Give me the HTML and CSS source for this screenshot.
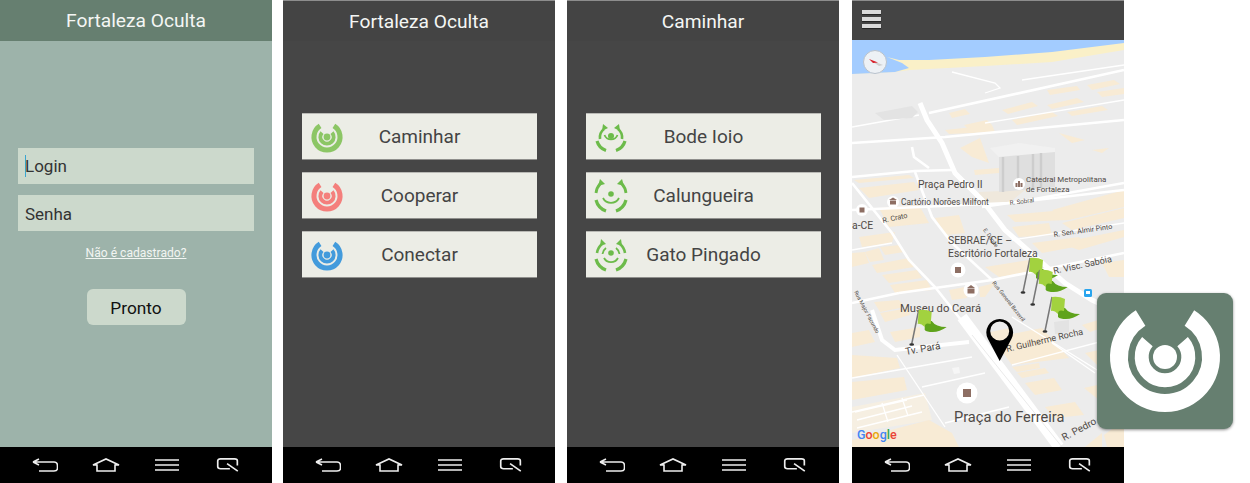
FILE: index.html
```html
<!DOCTYPE html>
<html lang="en">
<head>
    <meta charset="UTF-8">
    <meta name="viewport" content="width=device-width, initial-scale=1.0">
    <title>Fortaleza Oculta</title>
    <link rel="stylesheet" href="styles.css">
</head>
<body>
    <!-- shared icons -->
    <svg class="sprites" width="0" height="0">
        <symbol id="logo" viewBox="-60 -60 120 120">
            <path d="M-24.4 -39 A46 46 0 1 0 24.4 -39" fill="none" stroke="currentColor" stroke-width="18"/>
            <path d="M-17.6 -15.3 A23.3 23.3 0 1 0 17.6 -15.3" fill="none" stroke="currentColor" stroke-width="14"/>
            <circle r="12" fill="currentColor"/>
        </symbol>
        <symbol id="walk-a" viewBox="-20 -20 40 40">
            <g fill="none" stroke="currentColor">
                <path stroke-width="3.2" d="M-14 4 A14 14 0 0 0 -5 13.500"/>
                <path stroke-width="3.2" d="M14 4 A14 14 0 0 1 5 13.500"/>
                <path stroke-width="2.6" d="M-11 2 A11 11 0 0 1 -7 -8"/>
                <path stroke-width="2.6" d="M11 2 A11 11 0 0 0 7 -8"/>
                <path stroke-width="1.8" d="M-6.500 -2 A7 7 0 0 0 6.500 -2"/>
            </g>
            <polygon fill="currentColor" points="-8,-13 -3,-9 -9,-6"/>
            <polygon fill="currentColor" points="8,-13 3,-9 9,-6"/>
            <circle cy="-1" r="3" fill="currentColor"/>
        </symbol>
        <symbol id="walk-b" viewBox="-20 -20 40 40">
            <g fill="none" stroke="currentColor">
                <path stroke-width="3.2" d="M-15 4 A16 16 0 0 0 -5 15"/>
                <path stroke-width="3.2" d="M15 4 A16 16 0 0 1 5 15"/>
                <path stroke-width="2.8" d="M-15 -3 A16 16 0 0 1 -11 -12"/>
                <path stroke-width="2.8" d="M15 -3 A16 16 0 0 0 11 -12"/>
                <path stroke-width="1.8" d="M-8 2 A9 9 0 0 0 8 2"/>
            </g>
            <polygon fill="currentColor" points="-11,-17 -6,-12 -13,-10"/>
            <polygon fill="currentColor" points="11,-17 6,-12 13,-10"/>
            <circle cy="-2" r="2.8" fill="currentColor"/>
        </symbol>
        <symbol id="walk-c" viewBox="-20 -20 40 40">
            <g fill="none" stroke="currentColor">
                <path stroke-width="3.2" d="M-15 4 A16 16 0 0 0 -5 15"/>
                <path stroke-width="3.2" d="M15 4 A16 16 0 0 1 5 15"/>
                <path stroke-width="2.6" d="M-14 -2 A14 14 0 0 1 -9 -11"/>
                <path stroke-width="2.6" d="M14 -2 A14 14 0 0 0 9 -11"/>
                <path stroke-width="1.8" d="M-8.500 -1 A9 9 0 0 1 -5 -7"/>
                <path stroke-width="1.8" d="M8.500 -1 A9 9 0 0 0 5 -7"/>
                <path stroke-width="1.8" d="M-7 3 A8 8 0 0 0 7 3"/>
            </g>
            <polygon fill="currentColor" points="-10,-16 -5,-11 -11,-9"/>
            <polygon fill="currentColor" points="10,-16 5,-11 11,-9"/>
            <circle cy="-2" r="2.8" fill="currentColor"/>
        </symbol>
        <symbol id="nav-back" viewBox="0 0 26 14">
            <path d="M1 4 H22 Q25.5 4 25.5 8 V10 Q25.5 13 22 13 H7 M1 4 L7 1 M1 4 L7 7" fill="none" stroke="currentColor" stroke-width="1.6"/>
        </symbol>
        <symbol id="nav-home" viewBox="0 0 28 14">
            <path d="M1 7 L14 1 L27 7 H23 V13 H5 V7 Z" fill="none" stroke="currentColor" stroke-width="1.6"/>
        </symbol>
        <symbol id="nav-menu" viewBox="0 0 24 14">
            <path d="M0 2 H24 M0 7 H24 M0 12 H24" fill="none" stroke="currentColor" stroke-width="1.7"/>
        </symbol>
        <symbol id="nav-recent" viewBox="0 0 24 15">
            <path d="M14 11.500 H4 Q1 11.500 1 9 V3 Q1 1 4 1 H19 Q22 1 22 3 V8 M11 6 L22.500 14" fill="none" stroke="currentColor" stroke-width="1.8"/>
        </symbol>
        <symbol id="flag" viewBox="-10 -2 42 42">
            <path d="M0 0 L-7 34" stroke="#777" stroke-width="1.5"/>
            <ellipse cx="-7" cy="34.500" rx="2.400" ry="1.300" fill="#333"/>
            <path d="M6 12 Q10 10 13 11 Q17 17 28 17 Q21 22 14 22 Q8 22 6 20 Z" fill="#5fa31c"/>
            <path d="M0 0 Q7 -1 13 2 L12 14 Q6 12 6 17 Q2 13 -1 14 Z" fill="#a2d23f"/>
        </symbol>
    </svg>

    <div class="page">
        <section class="screen screen-login">
            <header class="bar bar-green">Fortaleza Oculta</header>
            <main class="content login">
                <div class="field"><span class="caret"></span>Login</div>
                <div class="field">Senha</div>
                <a class="signup" href="#">Não é cadastrado?</a>
                <button class="done">Pronto</button>
            </main>
            <nav class="nav">
                <span class="nav-item"><svg class="nav-i w26"><use href="#nav-back"/></svg></span>
                <span class="nav-item"><svg class="nav-i w28"><use href="#nav-home"/></svg></span>
                <span class="nav-item"><svg class="nav-i w24"><use href="#nav-menu"/></svg></span>
                <span class="nav-item"><svg class="nav-i w24"><use href="#nav-recent"/></svg></span>
            </nav>
        </section>

        <section class="screen screen-dark">
            <header class="bar bar-dark">Fortaleza Oculta</header>
            <main class="content menu">
                <button class="item"><svg class="item-icon green"><use href="#logo"/></svg>Caminhar</button>
                <button class="item"><svg class="item-icon red"><use href="#logo"/></svg>Cooperar</button>
                <button class="item"><svg class="item-icon blue"><use href="#logo"/></svg>Conectar</button>
            </main>
            <nav class="nav">
                <span class="nav-item"><svg class="nav-i w26"><use href="#nav-back"/></svg></span>
                <span class="nav-item"><svg class="nav-i w28"><use href="#nav-home"/></svg></span>
                <span class="nav-item"><svg class="nav-i w24"><use href="#nav-menu"/></svg></span>
                <span class="nav-item"><svg class="nav-i w24"><use href="#nav-recent"/></svg></span>
            </nav>
        </section>

        <section class="screen screen-dark screen-third">
            <header class="bar bar-dark">Caminhar</header>
            <main class="content menu">
                <button class="item"><svg class="walk-icon"><use href="#walk-a"/></svg>Bode Ioio</button>
                <button class="item"><svg class="walk-icon"><use href="#walk-b"/></svg>Calungueira</button>
                <button class="item"><svg class="walk-icon"><use href="#walk-c"/></svg>Gato Pingado</button>
            </main>
            <nav class="nav">
                <span class="nav-item"><svg class="nav-i w26"><use href="#nav-back"/></svg></span>
                <span class="nav-item"><svg class="nav-i w28"><use href="#nav-home"/></svg></span>
                <span class="nav-item"><svg class="nav-i w24"><use href="#nav-menu"/></svg></span>
                <span class="nav-item"><svg class="nav-i w24"><use href="#nav-recent"/></svg></span>
            </nav>
        </section>

        <section class="screen screen-dark screen-fourth">
            <header class="bar bar-dark bar-map">
                <div class="burger"><span></span><span></span><span></span></div>
            </header>
            <svg class="map" viewBox="0 0 272 407">
                <rect class="ground" width="272" height="407"/>
                <polygon class="sand" points="0,34 43,32 58,30 133,26 200,22 272,10 272,0 0,0"/>
                <polygon class="water" points="0,0 272,0 272,3 200,12 133,17 77,20 47,20 35,17 50,23 57,28 43,32 0,34"/>

                <!-- city blocks, upper part -->
                <g class="blocks">
                    <polygon points="97,73 113,69 118,74 100,78"/>
                    <polygon points="150,70 180,62 186,66 156,74"/>
                    <polygon points="195,65 225,58 232,62 200,69"/>
                    <polygon points="112,85 135,80 140,85 117,90"/>
                    <polygon points="160,80 200,72 206,76 165,85"/>
                    <polygon points="215,72 250,66 256,70 220,76"/>
                    <polygon points="235,45 262,40 268,44 240,50"/>
                    <polygon points="195,50 225,46 228,50 198,55"/>
                    <polygon points="245,52 272,48 272,54 250,57"/>
                    <polygon points="108,108 128,98 137,123 120,117"/>
                    <polygon points="93,90 140,85 143,92 97,94"/>
                    <polygon points="122,130 147,128 147,133 123,135"/>
                    <polygon points="207,93 233,100 220,103"/>
                    <polygon points="240,110 257,108 250,113"/>
                    <polygon points="2,140 57,135 62,138 7,143"/>
                    <polygon points="7,148 62,142 67,150 17,158"/>
                    <polygon points="27,168 67,165 77,183 37,187"/>
                    <polygon points="83,178 107,175 113,193 93,195"/>
                    <polygon points="7,197 43,192 40,203 10,207"/>
                    <polygon points="0,213 13,212 17,223 0,227"/>
                    <polygon points="13,212 27,208 32,220 18,222"/>
                    <polygon points="20,225 57,218 62,227 25,233"/>
                    <polygon points="28,207 48,205 52,212 33,215"/>
                    <polygon points="30,235 65,230 70,238 37,243"/>
                    <polygon points="38,245 75,240 80,250 43,253"/>
                    <polygon points="155,175 213,170 217,180 163,182"/>
                    <polygon points="160,187 197,183 200,195 167,197"/>
                    <polygon points="200,170 272,150 272,167 217,180"/>
                    <polygon points="210,183 272,168 272,178 220,190"/>
                    <polygon points="180,203 227,197 233,205 190,213"/>
                    <polygon points="133,227 177,220 187,230 147,237"/>
                    <polygon points="207,203 272,190 272,197 227,210"/>
                    <polygon points="250,223 272,220 272,237 257,237"/>
                    <polygon points="97,250 113,247 115,258 100,260"/>
                    <polygon points="127,247 143,243 133,257 128,257"/>

                    <!-- lower part -->
                    <polygon points="22,262 47,260 53,267 28,272"/>
                    <polygon points="28,273 57,268 58,275 33,282"/>
                    <polygon points="38,292 68,287 68,297 43,302"/>
                    <polygon points="0,293 17,290 23,302 0,307"/>
                    <polygon points="0,315 45,318 48,328 0,338"/>
                    <polygon points="0,342 52,337 55,350 0,360"/>
                    <polygon class="blocks-pale" points="0,367 73,353 80,380 0,393"/>
                    <polygon points="0,400 77,380 100,393 107,407 0,407"/>
                    <polygon points="140,298 190,288 217,318 160,325"/>
                    <polygon points="138,292 158,288 160,300 140,303"/>
                    <polygon points="160,327 187,323 188,328 165,332"/>
                    <polygon points="165,333 193,328 197,333 170,338"/>
                    <polygon points="173,343 202,338 210,350 183,355"/>
                    <polygon points="193,367 223,362 232,375 203,378"/>
                    <polygon points="233,313 247,310 247,327"/>
                    <polygon points="232,348 245,345 247,360"/>
                    <polygon points="233,407 250,393 250,407"/>
                    <polygon points="252,395 272,380 272,407 255,407"/>
                    <polygon points="230,285 272,272 272,280 238,292"/>
                </g>
                <polygon class="taupe" points="127,152 173,150 157,163 127,163"/>
                <polygon class="pale-square" points="100,328 107,327 108,333 102,334"/>

                <!-- thin streets -->
                <g class="roads-thin">
                    <path d="M0 87 L67 75 M133 83 L272 60 M170 40 L272 25"/>
                    <path d="M100 32 L143 43 L148 48 L133 53"/>
                    <path d="M160 200 L272 183 M0 210 L40 203"/>
                    <path d="M160 277 L250 333 M200 303 L243 333"/>
                    <path d="M0 338 L120 317 M70 347 L133 333 M93 383 L157 367"/>
                    <path d="M45 315 L93 387 M0 372 L72 355"/>
                    <path d="M160 325 L255 300"/>
                    <path d="M3 372 L55 360 M5 380 L60 366 M5 388 L70 372 M30 363 L36 382 M50 358 L56 376"/>
                </g>
                <g class="roads">
                    <path d="M0 103 L93 97 L272 80"/>
                    <path d="M77 73 L272 30"/>
                    <path d="M0 137 L63 131 L100 130"/>
                    <path d="M0 170 L157 163 L272 150"/>
                    <path d="M130 167 L177 160 L272 143"/>
                    <path d="M47 253 L140 240 L272 213"/>
                    <path d="M0 143 L40 193 L57 220 L83 247 L113 285"/>
                    <path d="M63 132 L80 177 L100 203 L140 240"/>
                    <path d="M60 107 L62 117 L77 128"/>
                    <path d="M0 263 L47 253"/>
                </g>
                <path class="road-tv" d="M20 270 L30 300 L43 310 L117 302"/>
                <path class="road-wide" d="M110 277 L207 407"/>
                <path class="road-median" d="M120 295 L210 407"/>
                <path class="road-main" d="M68 63 L75 80 L90 103 L103 133 L130 160 L153 190 L187 220 L213 243 L240 260 L272 275"/>

                <!-- buildings -->
                <polygon class="tower-low" points="23,73 60,66 66,72 60,78 32,80"/>
                <polygon class="tower-top" points="138,108 167,103 203,108 203,118 147,117"/>
                <polygon class="tower" points="147,117 203,112 203,147 147,152"/>
                <path class="tower-line" d="M151 117 V152 M166 116 V150 M181 114 V149 M189 113 V148"/>
                <polygon class="tower-low" points="202,282 217,280 217,292 203,294"/>

                <g class="labels">
                    <text class="lb-m" x="66" y="148">Praça Pedro II</text>
                    <text class="lb-cat" x="174" y="142">Catedral Metropolitana</text>
                    <text class="lb-cat" x="174" y="152">de Fortaleza</text>
                    <text class="lb-cart" x="49" y="165">Cartório Norões Milfont</text>
                    <text class="lb-m" x="0" y="189">a-CE</text>
                    <text class="lb-xs" transform="translate(31 183) rotate(-12)">R. Crato</text>
                    <text class="lb-min" transform="translate(158 165) rotate(-7)">R. Sobral</text>
                    <text class="lb-xs" transform="translate(202 197) rotate(-8)">R. Sen. Almir Pinto</text>
                    <text class="lb-m" x="96" y="204">SEBRAE/CE –</text>
                    <text class="lb-m" x="96" y="217">Escritório Fortaleza</text>
                    <text class="lb-s" transform="translate(202 234) rotate(-12)">R. Visc. Sabóia</text>
                    <text class="lb-tiny" transform="translate(140 243) rotate(52)">Rua General Bezerril</text>
                    <text class="lb-tiny" transform="translate(2 252) rotate(62)">Rua Major Facundo</text>
                    <text class="lb-tiny" transform="translate(131 190) rotate(55)">E. Duque</text>
                    <text class="lb-mus" x="48" y="272">Museu do Ceará</text>
                    <text class="lb-t" transform="translate(54 315) rotate(-10)">Tv. Pará</text>
                    <text class="lb-s" transform="translate(155 312) rotate(-13)">R. Guilherme Rocha</text>
                    <text class="lb-l" x="102" y="382">Praça do Ferreira</text>
                    <text class="lb-t" transform="translate(212 401) rotate(-28)">R. Pedro</text>
                </g>

                <!-- points of interest -->
                <g class="poi"><circle cx="10" cy="170" r="6"/><rect x="7.500" y="167.500" width="5" height="5"/></g>
                <g class="poi"><circle cx="41" cy="162" r="6"/><polygon points="37,160 41,157.500 45,160"/><rect x="38" y="160.500" width="6" height="4"/></g>
                <g class="poi"><circle cx="167" cy="144" r="6"/><rect x="163.500" y="143" width="2" height="4"/><rect x="166" y="141" width="2" height="6"/><rect x="168.500" y="143" width="2" height="4"/></g>
                <g class="poi"><circle cx="106" cy="230" r="7.500"/><rect x="103" y="227" width="6" height="6"/></g>
                <g class="poi"><circle cx="119" cy="250" r="7.500"/><polygon points="115,248 119,245 123,248"/><rect x="115.500" y="248.500" width="7" height="5"/></g>
                <g class="poi"><circle cx="115" cy="353" r="10.500"/><rect x="111" y="349" width="8" height="8"/></g>
                <rect class="transit" x="232" y="249" width="8" height="8" rx="1.500"/>
                <rect class="transit-win" x="234" y="251" width="4" height="3"/>

                <use href="#flag" x="56.700" y="268" width="42" height="42"/>
                <use href="#flag" x="168" y="216" width="42" height="42"/>
                <use href="#flag" x="177.700" y="228" width="42" height="42"/>
                <use href="#flag" x="190" y="255" width="42" height="42"/>

                <path class="pin" fill-rule="evenodd" d="M147.700 321 L136 299 A13.400 13.400 0 1 1 159.400 299 Z M147.700 281.500 A9.500 9.500 0 1 0 147.700 300.500 A9.500 9.500 0 1 0 147.700 281.500 Z"/>

                <circle class="compass" cx="23" cy="22" r="11.500"/>
                <polygon class="needle-w" points="18,20 31,25 27,26"/>
                <polygon class="needle-r" points="17,19 26,22.500 21,23"/>

                <text class="google" x="5" y="399"><tspan class="g-blue">G</tspan><tspan class="g-red">o</tspan><tspan class="g-yellow">o</tspan><tspan class="g-blue">g</tspan><tspan class="g-green">l</tspan><tspan class="g-red">e</tspan></text>
            </svg>
            <nav class="nav">
                <span class="nav-item"><svg class="nav-i w26"><use href="#nav-back"/></svg></span>
                <span class="nav-item"><svg class="nav-i w28"><use href="#nav-home"/></svg></span>
                <span class="nav-item"><svg class="nav-i w24"><use href="#nav-menu"/></svg></span>
                <span class="nav-item"><svg class="nav-i w24"><use href="#nav-recent"/></svg></span>
            </nav>
        </section>

        <div class="app-badge"><svg class="app-logo"><use href="#logo"/></svg></div>
    </div>
</body>
</html>
```

FILE: styles.css
```css
* { box-sizing: border-box; }

body {
    margin: 0;
    background: #fff;
    font-family: Roboto, "Noto Sans", sans-serif;
}

.sprites { position: absolute; }

.page {
    position: relative;
    display: flex;
    width: 1250px;
    height: 483px;
    overflow: hidden;
}

.screen {
    display: flex;
    flex-direction: column;
    width: 272px;
    height: 483px;
    flex: none;
}
.screen + .screen { margin-left: 11px; }
.screen-third + .screen-fourth { margin-left: 13px; }
.screen + .screen-third { margin-left: 12px; }

.screen-login { background: #9db3aa; }
.screen-dark { background: #464646; }

.bar {
    height: 41px;
    flex: none;
    display: flex;
    align-items: center;
    justify-content: center;
    color: #f4f6f4;
    font-size: 19.2px;
}
.bar-green { background: #667f70; }
.bar-dark {
    background: #444;
    border-top: 1px solid #8d8d8d;
}
.bar-map {
    height: 40px;
    justify-content: flex-start;
    padding: 0 0 3px 10px;
}

.burger {
    display: flex;
    flex-direction: column;
    gap: 3px;
}
.burger span {
    display: block;
    width: 19px;
    height: 4px;
    background: #d9d9d9;
    box-shadow: 0 1px 1px #222;
}

.content { flex: 1; min-height: 0; }

.login {
    display: flex;
    flex-direction: column;
    align-items: center;
    padding: 107px 18px 0;
}
.field {
    display: flex;
    align-items: center;
    width: 100%;
    height: 36px;
    margin-bottom: 11px;
    padding: 0 0 0 7px;
    background: #ccd9cc;
    color: #333;
    font-size: 17px;
}
.field + .field { padding-top: 2px; }
.caret {
    width: 1px;
    height: 22px;
    margin-right: -1px;
    background: #3aa5cf;
}
.signup {
    margin-top: 4px;
    color: #f2f5f2;
    font-size: 12.1px;
}
.done {
    width: 99px;
    height: 36px;
    margin-top: 29px;
    padding-top: 2px;
    border: none;
    border-radius: 6px;
    background: #ccd9cc;
    color: #111;
    font: 17.3px Roboto, sans-serif;
}

.menu {
    display: flex;
    flex-direction: column;
    gap: 12px;
    padding: 72px 18px 0 19px;
}
.item {
    position: relative;
    height: 47px;
    flex: none;
    border: none;
    border-top: 1px solid #b9b9b5;
    border-bottom: 1px solid #8f8f8c;
    background: #ecede6;
    color: #444;
    font: 19px Roboto, sans-serif;
}
.item-icon {
    position: absolute;
    left: 8px;
    top: 6px;
    width: 34px;
    height: 34px;
}
.walk-icon {
    position: absolute;
    left: 5px;
    top: 3px;
    width: 40px;
    height: 40px;
    color: #6cbb4a;
}
.green { color: #8cc665; }
.red { color: #f47f7c; }
.blue { color: #439bdc; }

.map {
    display: block;
    width: 272px;
    height: 407px;
    flex: none;
}
.ground { fill: #ececec; }
.water { fill: #a3ccff; }
.sand { fill: #faf0c8; }
.blocks { fill: #f8ebd5; }
.blocks-pale { fill: #f6efe2; }
.taupe { fill: #efe8dc; }
.pale-square { fill: #f6f6f6; }
.roads, .road-main, .road-wide, .road-tv, .roads-thin { fill: none; stroke: #fff; }
.roads { stroke-width: 2.6; }
.road-main { stroke-width: 5; }
.road-tv { stroke-width: 4; }
.road-wide { stroke-width: 11; }
.road-median { fill: none; stroke: #e4e4e4; stroke-width: 0.8; }
.roads-thin { stroke-width: 1.3; }
.tower { fill: #dfdfdf; }
.tower-top { fill: #f1f1f1; }
.tower-low { fill: #e3e3e3; }
.tower-line { fill: none; stroke: #cdcdcd; stroke-width: 2.5; }

.labels text { fill: #4f4a46; font-family: Roboto, sans-serif; }
.lb-tiny { font-size: 5.5px; }
.lb-min { font-size: 6.2px; }
.lb-xs { font-size: 7.2px; }
.lb-cat { font-size: 7.9px; }
.lb-cart { font-size: 8.4px; }
.lb-s { font-size: 9px; }
.lb-t { font-size: 10px; }
.lb-m { font-size: 10.4px; }
.lb-mus { font-size: 11.2px; }
.lb-l { font-size: 14.6px; }

.poi circle { fill: #fff; }
.poi rect, .poi polygon { fill: #8d6e63; }
.transit { fill: #2aa5ee; }
.transit-win { fill: #fff; }
.pin { fill: #000; }
.compass { fill: #edf1f5; stroke: #b9c2cc; }
.needle-w { fill: #cfcfcf; }
.needle-r { fill: #d8202a; }
.google { font: 500 12.5px Roboto, sans-serif; }
.g-blue { fill: #4285f4; }
.g-red { fill: #ea4335; }
.g-yellow { fill: #e8a80c; }
.g-green { fill: #34a853; }

.nav {
    flex: none;
    display: flex;
    height: 36px;
    padding: 0 14px;
    background: #000;
    color: #eee;
}
.nav-item {
    display: flex;
    align-items: center;
    justify-content: center;
    width: 61px;
}
.nav-i { height: 14px; }
.w24 { width: 24px; }
.w26 { width: 26px; }
.w28 { width: 28px; }

.app-badge {
    position: absolute;
    left: 1097px;
    top: 293px;
    display: flex;
    align-items: center;
    justify-content: center;
    width: 136px;
    height: 136px;
    padding-bottom: 8px;
    border-radius: 9px;
    background: #667f70;
    box-shadow: 0 1px 3px rgba(0, 0, 0, 0.45);
    color: #fff;
}
.app-logo {
    width: 120px;
    height: 120px;
}
```
